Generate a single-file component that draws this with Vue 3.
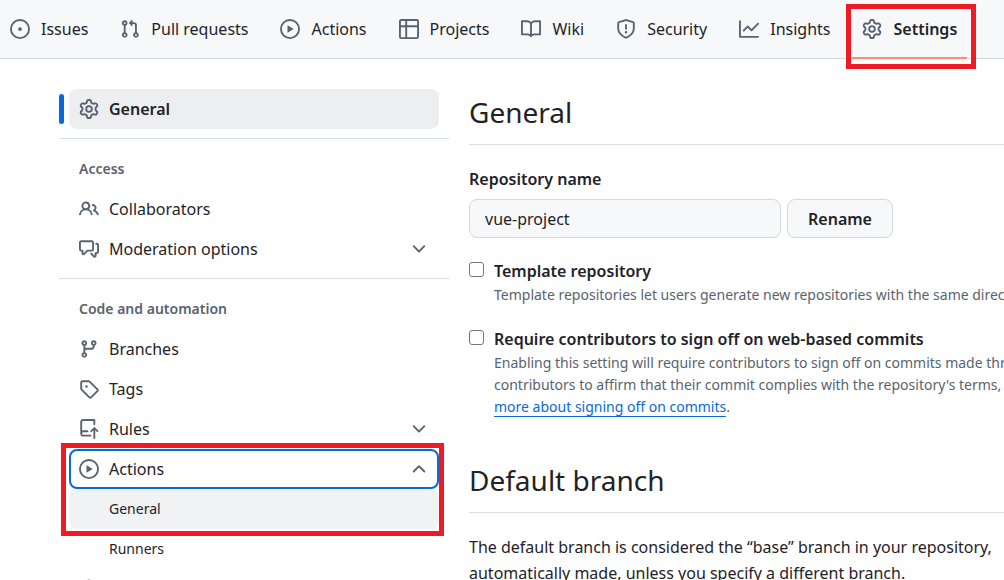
<script setup>
import { ref } from 'vue'

const icons = {
  issue: 'M8 9.5a1.5 1.5 0 1 0 0-3 1.5 1.5 0 0 0 0 3Z M8 0a8 8 0 1 1 0 16A8 8 0 0 1 8 0ZM1.5 8a6.5 6.5 0 1 0 13 0 6.5 6.5 0 0 0-13 0Z',
  pull: 'M1.5 3.25a2.25 2.25 0 1 1 3 2.122v5.256a2.251 2.251 0 1 1-1.5 0V5.372A2.25 2.25 0 0 1 1.5 3.25Zm5.677-.177L9.573.677A.25.25 0 0 1 10 .854V2.5h1A2.5 2.5 0 0 1 13.5 5v5.628a2.251 2.251 0 1 1-1.5 0V5a1 1 0 0 0-1-1h-1v1.646a.25.25 0 0 1-.427.177L7.177 3.427a.25.25 0 0 1 0-.354ZM3.75 2.5a.75.75 0 1 0 0 1.5.75.75 0 0 0 0-1.5Zm0 9.5a.75.75 0 1 0 0 1.5.75.75 0 0 0 0-1.5Zm8.25.75a.75.75 0 1 0 1.5 0 .75.75 0 0 0-1.5 0Z',
  play: 'M8 0a8 8 0 1 1 0 16A8 8 0 0 1 8 0ZM1.5 8a6.5 6.5 0 1 0 13 0 6.5 6.5 0 0 0-13 0Zm4.879-2.773 4.264 2.559a.25.25 0 0 1 0 .428l-4.264 2.559A.25.25 0 0 1 6 10.559V5.442a.25.25 0 0 1 .379-.215Z',
  table: 'M0 1.75C0 .784.784 0 1.75 0h12.5C15.216 0 16 .784 16 1.75v12.5A1.75 1.75 0 0 1 14.25 16H1.75A1.75 1.75 0 0 1 0 14.25ZM6.5 6.5v8h7.75a.25.25 0 0 0 .25-.25V6.5Zm8-1.5V1.75a.25.25 0 0 0-.25-.25H6.5V5Zm-13 1.5v7.75c0 .138.112.25.25.25H5v-8ZM5 5V1.5H1.75a.25.25 0 0 0-.25.25V5Z',
  book: 'M0 1.75A.75.75 0 0 1 .75 1h4.253c1.227 0 2.317.59 3 1.501A3.743 3.743 0 0 1 11.006 1h4.245a.75.75 0 0 1 .75.75v10.5a.75.75 0 0 1-.75.75h-4.507a2.25 2.25 0 0 0-1.591.659l-.622.621a.75.75 0 0 1-1.06 0l-.622-.621A2.25 2.25 0 0 0 5.258 13H.75a.75.75 0 0 1-.75-.75Zm7.251 10.324.004-5.073-.002-2.253A2.25 2.25 0 0 0 5.003 2.5H1.5v9h3.757a3.75 3.75 0 0 1 1.994.574ZM8.755 4.75l-.004 7.322a3.752 3.752 0 0 1 1.992-.572H14.5v-9h-3.495a2.25 2.25 0 0 0-2.25 2.25Z',
  shield: 'M7.467.133a1.748 1.748 0 0 1 1.066 0l5.25 1.68A1.75 1.75 0 0 1 15 3.48V7c0 1.566-.32 3.182-1.303 4.682-.983 1.498-2.585 2.813-5.032 3.855a1.697 1.697 0 0 1-1.33 0c-2.447-1.042-4.049-2.357-5.032-3.855C1.32 10.182 1 8.566 1 7V3.48a1.75 1.75 0 0 1 1.217-1.667Zm.61 1.429a.25.25 0 0 0-.153 0l-5.25 1.68a.25.25 0 0 0-.174.238V7c0 1.358.275 2.666 1.057 3.86.784 1.194 2.121 2.34 4.366 3.297a.196.196 0 0 0 .154 0c2.245-.956 3.582-2.104 4.366-3.298C13.225 9.666 13.5 8.36 13.5 7V3.48a.251.251 0 0 0-.174-.237l-5.25-1.68ZM8.75 4.75v3a.75.75 0 0 1-1.5 0v-3a.75.75 0 0 1 1.5 0ZM9 10.5a1 1 0 1 1-2 0 1 1 0 0 1 2 0Z',
  graph: 'M1.5 1.75V13.5h13.75a.75.75 0 0 1 0 1.5H.75a.75.75 0 0 1-.75-.75V1.75a.75.75 0 0 1 1.5 0Zm14.28 2.53-5.25 5.25a.75.75 0 0 1-1.06 0L7 7.06 4.28 9.78a.751.751 0 0 1-1.042-.018.751.751 0 0 1-.018-1.042l3.25-3.25a.75.75 0 0 1 1.06 0L10 7.94l4.72-4.72a.751.751 0 0 1 1.042.018.751.751 0 0 1 .018 1.042Z',
  gear: 'M8 0a8.2 8.2 0 0 1 .701.031C9.444.095 9.99.645 10.16 1.29l.288 1.107c.018.066.079.158.212.224.231.114.454.243.668.386.123.082.233.09.299.071l1.103-.303c.644-.176 1.392.021 1.82.63.27.385.506.792.704 1.218.315.675.111 1.422-.364 1.891l-.814.806c-.049.048-.098.147-.088.294.016.257.016.515 0 .772-.01.147.038.246.088.294l.814.806c.475.469.679 1.216.364 1.891a7.977 7.977 0 0 1-.704 1.217c-.428.61-1.176.807-1.82.63l-1.102-.302c-.067-.019-.177-.011-.3.071a5.909 5.909 0 0 1-.668.386c-.133.066-.194.158-.211.224l-.29 1.106c-.168.646-.715 1.196-1.458 1.26a8.006 8.006 0 0 1-1.402 0c-.743-.064-1.289-.614-1.458-1.26l-.289-1.106c-.018-.066-.079-.158-.212-.224a5.738 5.738 0 0 1-.668-.386c-.123-.082-.233-.09-.299-.071l-1.103.303c-.644.176-1.392-.021-1.82-.63a8.12 8.12 0 0 1-.704-1.218c-.315-.675-.111-1.422.363-1.891l.815-.806c.05-.048.098-.147.088-.294a6.214 6.214 0 0 1 0-.772c.01-.147-.038-.246-.088-.294l-.815-.806C.635 6.045.431 5.298.746 4.623a7.92 7.92 0 0 1 .704-1.217c.428-.61 1.176-.807 1.82-.63l1.102.302c.067.019.177.011.3-.071.214-.143.437-.272.668-.386.133-.066.194-.158.211-.224l.29-1.106C6.009.645 6.556.095 7.299.03 7.53.01 7.764 0 8 0Zm-.571 1.525c-.036.003-.108.036-.137.146l-.289 1.105c-.147.561-.549.967-.998 1.189-.173.086-.34.183-.5.29-.417.278-.97.423-1.529.27l-1.103-.303c-.109-.03-.175.016-.195.045-.22.312-.412.644-.573.99-.014.031-.021.11.059.19l.815.806c.411.406.562.957.53 1.456a4.709 4.709 0 0 0 0 .582c.032.499-.119 1.05-.53 1.456l-.815.806c-.081.08-.073.159-.059.19.162.346.353.677.573.989.02.03.085.076.195.046l1.102-.303c.56-.153 1.113-.008 1.53.27.161.107.328.204.501.29.447.222.85.629.997 1.189l.289 1.105c.029.109.101.143.137.146a6.6 6.6 0 0 0 1.142 0c.036-.003.108-.036.137-.146l.289-1.105c.147-.561.549-.967.998-1.189.173-.086.34-.183.5-.29.417-.278.97-.423 1.529-.27l1.103.303c.109.029.175-.016.195-.045.22-.313.411-.644.573-.99.014-.031.021-.11-.059-.19l-.815-.806c-.411-.406-.562-.957-.53-1.456a4.709 4.709 0 0 0 0-.582c-.032-.499.119-1.05.53-1.456l.815-.806c.081-.08.073-.159.059-.19a6.464 6.464 0 0 0-.573-.989c-.02-.03-.085-.076-.195-.046l-1.102.303c-.56.153-1.113.008-1.53-.27a4.44 4.44 0 0 0-.501-.29c-.447-.222-.85-.629-.997-1.189l-.289-1.105c-.029-.11-.101-.143-.137-.146a6.6 6.6 0 0 0-1.142 0ZM11 8a3 3 0 1 1-6 0 3 3 0 0 1 6 0ZM9.5 8a1.5 1.5 0 1 0-3.001.001A1.5 1.5 0 0 0 9.5 8Z',
  people: 'M2 5.5a3.5 3.5 0 1 1 5.898 2.549 5.508 5.508 0 0 1 3.034 4.084.75.75 0 1 1-1.482.235 4 4 0 0 0-7.9 0 .75.75 0 0 1-1.482-.236A5.507 5.507 0 0 1 3.102 8.05 3.493 3.493 0 0 1 2 5.5ZM11 4a3.001 3.001 0 0 1 2.22 5.018 5.01 5.01 0 0 1 2.56 3.012.749.749 0 0 1-.885.954.752.752 0 0 1-.549-.514 3.507 3.507 0 0 0-2.522-2.372.75.75 0 0 1-.574-.73v-.352a.75.75 0 0 1 .416-.672A1.5 1.5 0 0 0 11 5.5.75.75 0 0 1 11 4Zm-5.5-.5a2 2 0 1 0-.001 3.999A2 2 0 0 0 5.5 3.5Z',
  discussion: 'M1.75 1h8.5c.966 0 1.75.784 1.75 1.75v5.5A1.75 1.75 0 0 1 10.25 10H7.061l-2.574 2.573A1.458 1.458 0 0 1 2 11.543V10h-.25A1.75 1.75 0 0 1 0 8.25v-5.5C0 1.784.784 1 1.75 1ZM1.5 2.75v5.5c0 .138.112.25.25.25h1a.75.75 0 0 1 .75.75v2.19l2.72-2.72a.749.749 0 0 1 .53-.22h3.5a.25.25 0 0 0 .25-.25v-5.5a.25.25 0 0 0-.25-.25h-8.5a.25.25 0 0 0-.25.25Zm13 2a.25.25 0 0 0-.25-.25h-.5a.75.75 0 0 1 0-1.5h.5c.966 0 1.75.784 1.75 1.75v5.5A1.75 1.75 0 0 1 14.25 12H14v1.543a1.458 1.458 0 0 1-2.487 1.03L9.22 12.28a.749.749 0 0 1 .326-1.275.749.749 0 0 1 .734.215l2.22 2.22v-2.19a.75.75 0 0 1 .75-.75h1a.25.25 0 0 0 .25-.25Z',
  branch: 'M9.5 3.25a2.25 2.25 0 1 1 3 2.122V6A2.5 2.5 0 0 1 10 8.5H6a1 1 0 0 0-1 1v1.128a2.251 2.251 0 1 1-1.5 0V5.372a2.25 2.25 0 1 1 1.5 0v1.836A2.493 2.493 0 0 1 6 7h4a1 1 0 0 0 1-1v-.628A2.25 2.25 0 0 1 9.5 3.25Zm-6 0a.75.75 0 1 0 1.5 0 .75.75 0 0 0-1.5 0Zm8.25-.75a.75.75 0 1 0 0 1.5.75.75 0 0 0 0-1.5ZM4.25 12a.75.75 0 1 0 0 1.5.75.75 0 0 0 0-1.5Z',
  tag: 'M1 7.775V2.75C1 1.784 1.784 1 2.75 1h5.025c.464 0 .91.184 1.238.513l6.25 6.25a1.75 1.75 0 0 1 0 2.474l-5.026 5.026a1.75 1.75 0 0 1-2.474 0l-6.25-6.25A1.752 1.752 0 0 1 1 7.775Zm1.5 0c0 .066.026.13.073.177l6.25 6.25a.25.25 0 0 0 .354 0l5.025-5.025a.25.25 0 0 0 0-.354l-6.25-6.25a.25.25 0 0 0-.177-.073H2.75a.25.25 0 0 0-.25.25ZM6 5a1 1 0 1 1 0 2 1 1 0 0 1 0-2Z',
  rules: 'M1 2.5A2.5 2.5 0 0 1 3.5 0h8.75a.75.75 0 0 1 .75.75v3.5a.75.75 0 0 1-1.5 0V1.5h-8a1 1 0 0 0-1 1v6.708A2.493 2.493 0 0 1 3.5 9h3.25a.75.75 0 0 1 0 1.5H3.5a1 1 0 0 0 0 2h5.75a.75.75 0 0 1 0 1.5H3.5A2.5 2.5 0 0 1 1 11.5Zm13.23 7.79-1.23-1.224v6.184a.75.75 0 0 1-1.5 0V9.066L10.28 10.28a.75.75 0 0 1-1.06-1.06l2.505-2.504a.75.75 0 0 1 1.06 0L15.29 9.22a.751.751 0 0 1-.018 1.042.751.751 0 0 1-1.042.018Z',
  webhook: 'M5.5 4.25a2.25 2.25 0 0 1 4.5 0 .75.75 0 0 0 1.5 0 3.75 3.75 0 1 0-6.14 2.889l-2.272 4.258a.75.75 0 0 0 1.324.706L7 7.25a.75.75 0 0 0-.309-1.015A2.25 2.25 0 0 1 5.5 4.25Z',
  down: 'M12.78 5.22a.749.749 0 0 1 0 1.06l-4.25 4.25a.749.749 0 0 1-1.06 0L3.22 6.28a.749.749 0 1 1 1.06-1.06L8 8.939l3.72-3.719a.749.749 0 0 1 1.06 0Z',
  up: 'M3.22 10.53a.749.749 0 0 1 0-1.06l4.25-4.25a.749.749 0 0 1 1.06 0l4.25 4.25a.749.749 0 1 1-1.06 1.06L8 6.811 4.28 10.53a.749.749 0 0 1-1.06 0Z'
}

const tabs = [
  ['issue', 'Issues'],
  ['pull', 'Pull requests'],
  ['play', 'Actions'],
  ['table', 'Projects'],
  ['book', 'Wiki'],
  ['shield', 'Security'],
  ['graph', 'Insights']
]

const repoName = ref('vue-project')
const template = ref(false)
const signOff = ref(false)
</script>

<template>
  <div class="page">
    <nav class="tabs" aria-label="Repository">
      <a v-for="[icon, label] in tabs" :key="label" class="tab" href="#">
        <svg class="icon" viewBox="0 0 16 16" aria-hidden="true"><path :d="icons[icon]" /></svg>
        <span>{{ label }}</span>
      </a>
      <a class="tab current" href="#" aria-current="page">
        <svg class="icon" viewBox="0 0 16 16" aria-hidden="true"><path :d="icons.gear" /></svg>
        <span>Settings</span>
        <i class="mark mark-tab"></i>
      </a>
    </nav>

    <div class="layout">
      <nav class="side" aria-label="Settings">
        <a class="row selected" href="#" aria-current="page">
          <svg class="icon" viewBox="0 0 16 16" aria-hidden="true"><path :d="icons.gear" /></svg>
          <span>General</span>
        </a>

        <section class="group">
          <h3>Access</h3>
          <a class="row" href="#">
            <svg class="icon" viewBox="0 0 16 16" aria-hidden="true"><path :d="icons.people" /></svg>
            <span>Collaborators</span>
          </a>
          <button class="row" type="button" aria-expanded="false">
            <svg class="icon" viewBox="0 0 16 16" aria-hidden="true"><path :d="icons.discussion" /></svg>
            <span>Moderation options</span>
            <svg class="icon chevron" viewBox="0 0 16 16" aria-hidden="true"><path :d="icons.down" /></svg>
          </button>
        </section>

        <section class="group">
          <h3>Code and automation</h3>
          <a class="row" href="#">
            <svg class="icon" viewBox="0 0 16 16" aria-hidden="true"><path :d="icons.branch" /></svg>
            <span>Branches</span>
          </a>
          <a class="row" href="#">
            <svg class="icon" viewBox="0 0 16 16" aria-hidden="true"><path :d="icons.tag" /></svg>
            <span>Tags</span>
          </a>
          <button class="row" type="button" aria-expanded="false">
            <svg class="icon" viewBox="0 0 16 16" aria-hidden="true"><path :d="icons.rules" /></svg>
            <span>Rules</span>
            <svg class="icon chevron" viewBox="0 0 16 16" aria-hidden="true"><path :d="icons.down" /></svg>
          </button>
          <div class="marked">
            <button class="row focused" type="button" aria-expanded="true">
              <svg class="icon" viewBox="0 0 16 16" aria-hidden="true"><path :d="icons.play" /></svg>
              <span>Actions</span>
              <svg class="icon chevron" viewBox="0 0 16 16" aria-hidden="true"><path :d="icons.up" /></svg>
            </button>
            <a class="row sub hovered" href="#">General</a>
            <i class="mark mark-side"></i>
          </div>
          <a class="row sub" href="#">Runners</a>
          <a class="row" href="#" aria-label="Webhooks">
            <svg class="icon" viewBox="0 0 16 16" aria-hidden="true"><path :d="icons.webhook" /></svg>
          </a>
        </section>
      </nav>

      <main class="content">
        <h2>General</h2>
        <form class="rename" @submit.prevent>
          <label for="repo-name">Repository name</label>
          <div class="fields">
            <input id="repo-name" v-model="repoName" class="name" type="text" />
            <button class="btn" type="submit">Rename</button>
          </div>
        </form>

        <div class="option">
          <input id="template" v-model="template" class="check" type="checkbox" />
          <div>
            <label for="template">Template repository</label>
            <p>Template repositories let users generate new repositories with the same directory</p>
          </div>
        </div>
        <div class="option">
          <input id="sign-off" v-model="signOff" class="check" type="checkbox" />
          <div>
            <label for="sign-off">Require contributors to sign off on web-based commits</label>
            <p>
              Enabling this setting will require contributors to sign off on commits made through<br />
              contributors to affirm that their commit complies with the repository's terms,<br />
              <a class="link" href="#">more about signing off on commits</a>.
            </p>
          </div>
        </div>

        <h2 class="second">Default branch</h2>
        <p class="body">
          The default branch is considered the “base” branch in your repository,<br />
          automatically made, unless you specify a different branch.
        </p>
      </main>
    </div>
  </div>
</template>

<style>
body {
  margin: 0;
  background: #fff;
}
</style>

<style scoped>
.page {
  height: 100vh;
  overflow: hidden;
  color: #1f2328;
  font: 400 16px/26px "Noto Sans", "Open Sans", sans-serif;
}

.page *,
.page *::before,
.page *::after {
  box-sizing: border-box;
}

a {
  color: inherit;
  text-decoration: none;
}

.icon {
  flex: none;
  width: 20px;
  height: 20px;
  fill: #59636e;
}

.tabs {
  display: flex;
  gap: 12px;
  height: 59px;
  background: #f6f8fa;
  border-bottom: 1px solid #d1d9e0;
}

.tab {
  position: relative;
  display: flex;
  align-items: center;
  gap: 11px;
  height: 58px;
  padding: 0 10px;
  white-space: nowrap;
}

.current {
  font-weight: 600;
}

.current::after {
  content: "";
  position: absolute;
  left: 0;
  right: 0;
  bottom: -1px;
  height: 2px;
  background: #fd8c73;
}

.mark {
  position: absolute;
  z-index: 1;
  border: 5px solid #ed1c24;
  pointer-events: none;
}

.mark-tab {
  inset: 4px -9px -11px -6px;
}

.mark-side {
  inset: -6px -5px -7px -8px;
}

.layout {
  display: grid;
  grid-template-columns: 390px minmax(0, 1fr);
  gap: 20px;
  padding: 30px 0 0 59px;
}

.row {
  position: relative;
  display: flex;
  align-items: center;
  gap: 10px;
  width: 370px;
  height: 40px;
  margin: 0 0 0 10px;
  padding: 0 10px;
  border: 0;
  border-radius: 8px;
  background: none;
  color: inherit;
  font: inherit;
  text-align: left;
}

.selected {
  background: #edeeef;
  font-weight: 600;
}

.selected::before {
  content: "";
  position: absolute;
  left: -10px;
  top: 5px;
  width: 5px;
  height: 30px;
  border-radius: 3px;
  background: #0969da;
}

.chevron {
  margin-left: auto;
}

.group {
  margin-top: 9px;
  border-top: 1px solid #d8dee4;
}

h3 {
  margin: 0;
  padding: 20px 20px 10px;
  color: #59636e;
  font-size: 14px;
  font-weight: 600;
  line-height: 20px;
}

.marked {
  position: relative;
  width: 370px;
  margin-left: 10px;
}

.marked .row {
  margin-left: 0;
}

.focused {
  border: 2px solid #0969da;
  padding: 0 8px;
}

.sub {
  padding-left: 40px;
  font-size: 14px;
}

.hovered {
  background: #f1f2f3;
}

.content {
  white-space: nowrap;
  overflow: hidden;
}

h2 {
  margin: 0;
  padding: 4px 0 12px;
  border-bottom: 1px solid #d8dee4;
  font-size: 28px;
  font-weight: 400;
  line-height: 39px;
}

.second {
  margin-top: 39px;
}

label {
  display: block;
  font-weight: 600;
}

.rename {
  margin: 21px 0 20px;
}

.fields {
  display: flex;
  gap: 6px;
  margin-top: 7px;
}

.name,
.btn {
  height: 39px;
  border: 1px solid #d1d9e0;
  border-radius: 8px;
  background: #f6f8fa;
  color: inherit;
  font: inherit;
}

.name {
  width: 312px;
  padding: 0 15px;
}

.btn {
  width: 106px;
  padding: 0;
  font-weight: 600;
}

.option {
  display: flex;
  gap: 10px;
  margin-bottom: 20px;
}

.check {
  appearance: none;
  flex: none;
  width: 15px;
  height: 15px;
  margin: 4px 0 0;
  border: 1px solid #767676;
  border-radius: 3px;
  background: #fff;
}

p {
  margin: 0;
}

.option p {
  color: #59636e;
  font-size: 14px;
  line-height: 22px;
}

.link {
  color: #0969da;
  border-bottom: 1px solid #0969da;
}

.body {
  margin-top: 21px;
}
</style>
